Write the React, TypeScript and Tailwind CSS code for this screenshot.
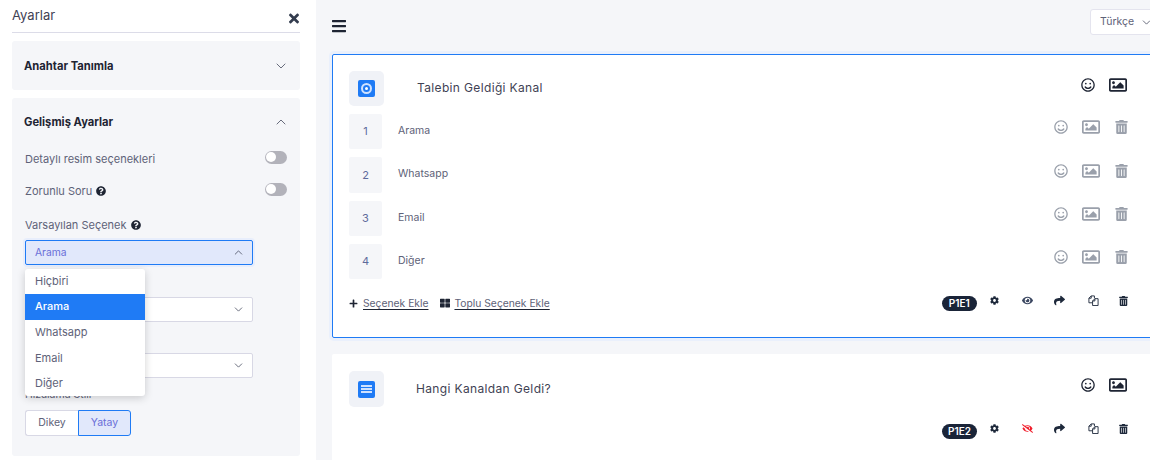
import React from 'react';
import { ChevronDown, ChevronUp } from 'lucide-react';
import {
  FaBars,
  FaTimes,
  FaQuestionCircle,
  FaRegSmile,
  FaRegImage,
  FaTrashAlt,
  FaCog,
  FaEye,
  FaEyeSlash,
  FaShare,
  FaPlus,
  FaThLarge,
} from 'react-icons/fa';

const options = [
  { label: 'Hiçbiri', cls: 'h-[25px]' },
  { label: 'Arama', cls: 'h-[26px] pb-[1px] bg-[#1f7bf5] text-white font-medium' },
  { label: 'Whatsapp', cls: 'h-[25px]' },
  { label: 'Email', cls: 'h-[26px]' },
  { label: 'Diğer', cls: 'h-[25px]' },
];

const rows = [
  { n: 1, label: 'Arama', h: 'h-[35px]' },
  { n: 2, label: 'Whatsapp', h: 'h-[36px]' },
  { n: 3, label: 'Email', h: 'h-[35px]' },
  { n: 4, label: 'Diğer', h: 'h-[35px]' },
];

const Toggle = () => (
  <div className="w-[22px] h-[13px] mb-[4px] rounded-full bg-[#b2b2ba] relative shrink-0">
    <div className="absolute left-[1px] top-[1.5px] w-[10px] h-[10px] rounded-full bg-white" />
  </div>
);

const SelectBox = ({ className }: { className: string }) => (
  <div className={`w-[228px] h-[25px] bg-white border border-[#d8d8e5] rounded-[2px] flex items-center justify-end pr-[7px] ${className}`}>
    <ChevronDown className="w-[13px] h-[13px] text-[#4a4f63]" strokeWidth={1.5} />
  </div>
);

const CopyIcon = () => (
  <svg viewBox="0 0 12 12" className="w-[11px] h-[11px] ml-[23px]" fill="none" stroke="currentColor" strokeWidth="1">
    <path d="M7 3.5V1H3.5L1 3.5V8.5H5" />
    <path d="M3.5 1V3.5H1" />
    <path d="M7.5 4H11V11.5H5V6.5Z" />
    <path d="M7.5 4V6.5H5" />
  </svg>
);

const Footer = ({ code, hidden }: { code: string; hidden?: boolean }) => (
  <div className="flex items-center text-[#1e293b]">
    <span className="w-[35px] h-[15px] rounded-full bg-[#1a2438] text-white text-[10px] font-semibold flex items-center justify-center">{code}</span>
    <div className="flex items-center mb-[5px]">
      <FaCog className="w-[9px] h-[9px] ml-[13px]" />
      {hidden ? (
        <FaEyeSlash className="w-[11px] h-[11px] ml-[23px] text-[#f01e2c]" />
      ) : (
        <FaEye className="w-[11px] h-[11px] ml-[23px] text-[#3a4660]" />
      )}
      <FaShare className="w-[11px] h-[11px] ml-[21px]" />
      <CopyIcon />
      <FaTrashAlt className="w-[9px] h-[10px] ml-[20px]" />
    </div>
  </div>
);

export default function App() {
  return (
    <div className="w-[1150px] h-[460px] overflow-hidden flex bg-[#f5f6f9] text-[#3f4254] font-['Inter',sans-serif]">
      <aside className="w-[316px] h-full bg-white shrink-0 pl-[12px] pr-[16px]">
        <div className="h-[33px] border-b border-[#dcdce8] flex justify-between">
          <span className="text-[13px] leading-[15px] pt-[8px] text-[#3f4254]">Ayarlar</span>
          <FaTimes className="w-[10px] h-[15px] mt-[11px] mr-[1px] text-[#333c4e]" />
        </div>

        <div className="mt-[8px] h-[49px] bg-[#f5f6f9] rounded-[3px] flex items-center justify-between pl-[12px] pr-[11px]">
          <span className="text-[11.2px] font-bold text-[#1e2433] mt-[1px]">Anahtar Tanımla</span>
          <ChevronDown className="w-[16px] h-[16px] text-[#4a4f63]" strokeWidth={1.25} />
        </div>

        <div className="mt-[8px] h-[358px] bg-[#f5f6f9] rounded-[3px] pl-[13px] pr-[13px] relative">
          <div className="flex items-center justify-between h-[16px] pt-[16px] box-content">
            <span className="text-[11.2px] font-bold text-[#1e2433] ml-[-1px]">Gelişmiş Ayarlar</span>
            <ChevronUp className="w-[16px] h-[16px] text-[#4a4f63] mr-[-2px]" strokeWidth={1.25} />
          </div>

          <div className="flex items-center justify-between mt-[21px] h-[16px]">
            <span className="text-[11px] text-[#5e6278]">Detaylı resim seçenekleri</span>
            <Toggle />
          </div>
          <div className="flex items-center justify-between mt-[16px] h-[16px]">
            <span className="text-[11px] text-[#5e6278] flex items-center gap-[4px]">
              Zorunlu Soru <FaQuestionCircle className="w-[10px] h-[10px] text-[#1e2433]" />
            </span>
            <Toggle />
          </div>
          <div className="mt-[18px] h-[16px] flex items-center gap-[4px] text-[11px] text-[#5e6278]">
            Varsayılan Seçenek <FaQuestionCircle className="w-[10px] h-[10px] text-[#1e2433]" />
          </div>

          <div className="mt-[7px] w-[228px] h-[25px] bg-[#e1e8fb] border border-[#1f7bf5] rounded-[2px] shadow-[0_0_0_2px_#e8eefc] flex items-center justify-between pl-[9px] pr-[7px]">
            <span className="text-[10.3px] text-[#6a6fd8]">Arama</span>
            <ChevronUp className="w-[13px] h-[13px] text-[#4a4f63]" strokeWidth={1.5} />
          </div>

          <SelectBox className="mt-[32px]" />
          <SelectBox className="mt-[31px]" />

          <div className="mt-[10px] h-[14px] text-[10.5px] leading-[14px] text-[#5e6278]">Hizalama Stili</div>
          <div className="mt-[8px] flex text-[10.5px]">
            <div className="w-[53px] h-[26px] bg-white border border-[#d8d8e5] rounded-l-[3px] border-r-0 flex items-center justify-center text-[#5e6278]">Dikey</div>
            <div className="w-[53px] h-[26px] bg-[#e1e8fb] border border-[#1f7bf5] rounded-r-[3px] flex items-center justify-center text-[#6a6fd8]">Yatay</div>
          </div>

          {/* open dropdown sits over the fields below */}
          <div className="absolute left-[13px] top-[171px] w-[120px] h-[127px] bg-white rounded-[3px] shadow-[0_2px_8px_rgba(0,0,0,0.18)] overflow-hidden text-[11px] text-[#5e6278]">
            {options.map((o) => (
              <div key={o.label} className={`pl-[10px] flex items-center ${o.cls}`}>
                {o.label}
              </div>
            ))}
          </div>
        </div>
      </aside>

      <main className="flex-1 min-w-0 pl-[16px]">
        <div className="h-[54px] flex items-start justify-between">
          <FaBars className="w-[14px] h-[16px] mt-[18px] text-[#1e2433]" />
          <div className="w-[70px] h-[26px] mt-[9px] mr-[-10px] bg-white border border-[#e4e4ee] rounded-[3px] flex items-center pl-[9px] gap-[6px] text-[10.5px] text-[#5e6278] shrink-0">
            Türkçe <ChevronDown className="w-[13px] h-[13px] text-[#4a4f63]" strokeWidth={1.5} />
          </div>
        </div>

        <section className="w-[840px] h-[284px] bg-white border border-[#1f7bf5] shadow-[0_0_0_3px_#eaf0fc] rounded-[2px] pl-[16px]">
          <div className="flex items-center h-[35px] mt-[16px]">
            <div className="w-[35px] h-[35px] rounded-[5px] bg-[#f0f2f7] flex items-center justify-center">
              <div className="w-[17px] h-[17px] rounded-[2px] bg-[#1f7bf5] flex items-center justify-center">
                <div className="w-[11px] h-[11px] rounded-full border-[2px] border-[#cfe2ff] flex items-center justify-center">
                  <div className="w-[3px] h-[3px] rounded-full bg-white" />
                </div>
              </div>
            </div>
            <span className="ml-[33px] w-[664px] mb-[2px] text-[12px] tracking-[0.35px] text-[#3f4254]">Talebin Geldiği Kanal</span>
            <div className="flex items-center mb-[8px] text-[#1e2433]">
              <FaRegSmile className="w-[14px] h-[14px]" />
              <FaRegImage className="w-[18px] h-[18px] ml-[14px]" />
            </div>
          </div>

          <div className="mt-[8px] flex flex-col gap-[8px]">
            {rows.map((r) => (
              <div key={r.n} className={`flex items-center ${r.h}`}>
                <div className={`w-[33px] ${r.h} bg-[#f5f6f9] rounded-[2px] flex items-center justify-center text-[11px] text-[#5e6a9c]`}>{r.n}</div>
                <span className="ml-[16px] w-[656px] mb-[2px] text-[10.5px] text-[#5e6278]">{r.label}</span>
                <div className="flex items-center mb-[9px] text-[#9aa0ab]">
                  <FaRegSmile className="w-[14px] h-[14px]" />
                  <FaRegImage className="w-[18px] h-[18px] ml-[14px]" />
                  <FaTrashAlt className="w-[13px] h-[14px] ml-[15px]" />
                </div>
              </div>
            ))}
          </div>

          <div className="flex items-center mt-[16px] h-[16px]">
            <FaPlus className="w-[9px] h-[9px] text-[#1e2433]" />
            <span className="ml-[5px] mt-[1px] text-[10.3px] underline underline-offset-2 decoration-[#1e2433] text-[#5e6278]">Seçenek Ekle</span>
            <FaThLarge className="w-[10px] h-[10px] ml-[12px] text-[#1e2433]" />
            <span className="ml-[4px] mt-[1px] text-[10.3px] underline underline-offset-2 decoration-[#1e2433] text-[#5e6278]">Toplu Seçenek Ekle</span>
            <div className="ml-[392px]"><Footer code="P1E1" /></div>
          </div>
        </section>

        <section className="w-[840px] h-[120px] mt-[16px] bg-white rounded-[2px] pl-[17px] pt-[17px]">
          <div className="flex items-center h-[36px]">
            <div className="w-[35px] h-[36px] rounded-[5px] bg-[#f0f2f7] flex items-center justify-center">
              <div className="w-[17px] h-[17px] rounded-[2px] bg-[#1f7bf5] flex flex-col items-center justify-center gap-[1px]">
                <div className="w-[11px] h-[2px] bg-[#cfe2ff]" />
                <div className="w-[11px] h-[2px] bg-[#cfe2ff]" />
                <div className="w-[11px] h-[2px] bg-[#cfe2ff]" />
              </div>
            </div>
            <span className="ml-[32px] w-[665px] text-[12px] tracking-[0.35px] text-[#3f4254]">Hangi Kanaldan Geldi?</span>
            <div className="flex items-center mb-[8px] text-[#1e2433]">
              <FaRegSmile className="w-[14px] h-[14px]" />
              <FaRegImage className="w-[18px] h-[18px] ml-[14px]" />
            </div>
          </div>
          <div className="flex justify-start pl-[593px] mt-[16px]">
            <Footer code="P1E2" hidden />
          </div>
        </section>
      </main>
    </div>
  );
}
